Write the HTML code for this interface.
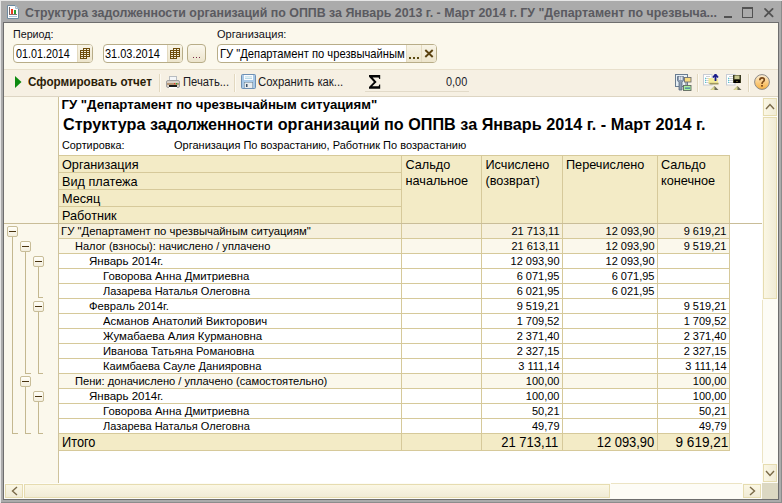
<!DOCTYPE html>
<html><head><meta charset="utf-8">
<style>
*{margin:0;padding:0;box-sizing:border-box}
html,body{width:782px;height:503px;overflow:hidden;background:#ababab}
body{position:relative;font-family:"Liberation Sans",sans-serif;color:#000}
.t{position:absolute;white-space:nowrap;line-height:1}
.b{position:absolute}
svg{position:absolute}
</style></head><body>

<div class="b" style="left:0px;top:0px;width:782px;height:1px;background:#e6e6e6"></div>
<div class="b" style="left:0px;top:0px;width:1px;height:503px;background:#e6e6e6"></div>
<div class="b" style="left:781px;top:1px;width:1px;height:502px;background:#8c8c8c"></div>
<div class="b" style="left:1px;top:502px;width:781px;height:1px;background:#8c8c8c"></div>
<div class="b" style="left:3px;top:22px;width:776px;height:478px;background:#6e6e6e"></div>
<div class="b" style="left:4px;top:23px;width:774px;height:476px;background:#fbf8ec"></div>
<svg style="left:7px;top:5px" width="12" height="14" viewBox="0 0 12 14">
<path d="M0.5 0.5h8l3 3v10h-11z" fill="#fdfdfd" stroke="#6e8aa0"/>
<path d="M8.5 0.5v3h3" fill="#d8e4ee" stroke="#a8bccc"/>
<rect x="2" y="2" width="1" height="8" fill="#7a6a6a"/>
<rect x="4" y="4" width="2" height="5" fill="#ea3a22"/>
<rect x="7" y="5" width="2" height="4" fill="#2aa030"/>
<rect x="2" y="9" width="8" height="1" fill="#8a7070"/>
<rect x="2" y="11" width="8" height="1" fill="#a8c4dc"/>
</svg>
<div class="t" style="left:25px;top:6.50px;font-size:12.4px;font-weight:bold;color:#5a5a60;">Структура задолженности организаций по ОППВ за Январь 2013 г. - Март 2014 г. ГУ "Департамент по чрезвыча...</div>
<div class="b" style="left:724px;top:16px;width:8px;height:2px;background:#525252"></div>
<div class="b" style="left:742px;top:7px;width:11px;height:11px;border:1px solid #525252;border-top-width:2px"></div>
<svg style="left:763px;top:7px" width="12" height="11" viewBox="0 0 12 11"><path d="M2 1.9L9.6 9.4M9.6 1.9L2 9.4" stroke="#525252" stroke-width="1.8" stroke-linecap="round"/></svg>
<div class="t" style="left:13px;top:28.69px;font-size:11px;color:#101018;transform:scaleX(0.974);transform-origin:0 0;">Период:</div>
<div class="t" style="left:217px;top:28.69px;font-size:11px;color:#101018;">Организация:</div>
<div class="b" style="left:13px;top:44px;width:80px;height:19px;border:1px solid #b8ad88;border-radius:4px;background:#fff"></div>
<div class="b" style="left:77px;top:45px;width:15px;height:17px;background:linear-gradient(#f8f4e6,#ede5cc);border-left:1px solid #e3dac0;border-radius:0 2px 2px 0"></div>
<svg style="left:80px;top:48px" width="10" height="11" viewBox="0 0 10 11"><rect x="3" y="0" width="7" height="1" fill="#6e4c0a"/><rect x="0" y="2" width="10" height="1" fill="#6e4c0a"/><rect x="0" y="4" width="10" height="1" fill="#6e4c0a"/><rect x="0" y="6" width="10" height="1" fill="#6e4c0a"/><rect x="0" y="8" width="10" height="1" fill="#6e4c0a"/><rect x="0" y="10" width="7" height="1" fill="#6e4c0a"/><rect x="3" y="1" width="1" height="1" fill="#6e4c0a"/><rect x="6" y="1" width="1" height="1" fill="#6e4c0a"/><rect x="9" y="1" width="1" height="1" fill="#6e4c0a"/><rect x="9" y="1" width="1" height="1" fill="#6e4c0a"/><rect x="4" y="1" width="1" height="1" fill="#f6f0da"/><rect x="5" y="1" width="1" height="1" fill="#f6f0da"/><rect x="7" y="1" width="1" height="1" fill="#f6f0da"/><rect x="8" y="1" width="1" height="1" fill="#f6f0da"/><rect x="0" y="3" width="1" height="1" fill="#6e4c0a"/><rect x="3" y="3" width="1" height="1" fill="#6e4c0a"/><rect x="6" y="3" width="1" height="1" fill="#6e4c0a"/><rect x="9" y="3" width="1" height="1" fill="#6e4c0a"/><rect x="9" y="3" width="1" height="1" fill="#6e4c0a"/><rect x="1" y="3" width="1" height="1" fill="#f6f0da"/><rect x="2" y="3" width="1" height="1" fill="#f6f0da"/><rect x="4" y="3" width="1" height="1" fill="#f6f0da"/><rect x="5" y="3" width="1" height="1" fill="#f6f0da"/><rect x="7" y="3" width="1" height="1" fill="#f6f0da"/><rect x="8" y="3" width="1" height="1" fill="#f6f0da"/><rect x="0" y="5" width="1" height="1" fill="#6e4c0a"/><rect x="3" y="5" width="1" height="1" fill="#6e4c0a"/><rect x="6" y="5" width="1" height="1" fill="#6e4c0a"/><rect x="9" y="5" width="1" height="1" fill="#6e4c0a"/><rect x="9" y="5" width="1" height="1" fill="#6e4c0a"/><rect x="1" y="5" width="1" height="1" fill="#f6f0da"/><rect x="2" y="5" width="1" height="1" fill="#f6f0da"/><rect x="4" y="5" width="1" height="1" fill="#f6f0da"/><rect x="5" y="5" width="1" height="1" fill="#f6f0da"/><rect x="7" y="5" width="1" height="1" fill="#f6f0da"/><rect x="8" y="5" width="1" height="1" fill="#f6f0da"/><rect x="0" y="7" width="1" height="1" fill="#6e4c0a"/><rect x="3" y="7" width="1" height="1" fill="#6e4c0a"/><rect x="6" y="7" width="1" height="1" fill="#6e4c0a"/><rect x="9" y="7" width="1" height="1" fill="#6e4c0a"/><rect x="9" y="7" width="1" height="1" fill="#6e4c0a"/><rect x="1" y="7" width="1" height="1" fill="#f6f0da"/><rect x="2" y="7" width="1" height="1" fill="#f6f0da"/><rect x="4" y="7" width="1" height="1" fill="#f6f0da"/><rect x="5" y="7" width="1" height="1" fill="#f6f0da"/><rect x="7" y="7" width="1" height="1" fill="#f6f0da"/><rect x="8" y="7" width="1" height="1" fill="#f6f0da"/><rect x="0" y="9" width="1" height="1" fill="#6e4c0a"/><rect x="3" y="9" width="1" height="1" fill="#6e4c0a"/><rect x="6" y="9" width="1" height="1" fill="#6e4c0a"/><rect x="6" y="9" width="1" height="1" fill="#6e4c0a"/><rect x="1" y="9" width="1" height="1" fill="#f6f0da"/><rect x="2" y="9" width="1" height="1" fill="#f6f0da"/><rect x="4" y="9" width="1" height="1" fill="#f6f0da"/><rect x="5" y="9" width="1" height="1" fill="#f6f0da"/></svg>
<div class="t" style="left:16px;top:47.52px;font-size:12.38px;;transform:scaleX(0.869);transform-origin:0 0;">01.01.2014</div>
<div class="b" style="left:103px;top:44px;width:80px;height:19px;border:1px solid #b8ad88;border-radius:4px;background:#fff"></div>
<div class="b" style="left:167px;top:45px;width:15px;height:17px;background:linear-gradient(#f8f4e6,#ede5cc);border-left:1px solid #e3dac0;border-radius:0 2px 2px 0"></div>
<svg style="left:170px;top:48px" width="10" height="11" viewBox="0 0 10 11"><rect x="3" y="0" width="7" height="1" fill="#6e4c0a"/><rect x="0" y="2" width="10" height="1" fill="#6e4c0a"/><rect x="0" y="4" width="10" height="1" fill="#6e4c0a"/><rect x="0" y="6" width="10" height="1" fill="#6e4c0a"/><rect x="0" y="8" width="10" height="1" fill="#6e4c0a"/><rect x="0" y="10" width="7" height="1" fill="#6e4c0a"/><rect x="3" y="1" width="1" height="1" fill="#6e4c0a"/><rect x="6" y="1" width="1" height="1" fill="#6e4c0a"/><rect x="9" y="1" width="1" height="1" fill="#6e4c0a"/><rect x="9" y="1" width="1" height="1" fill="#6e4c0a"/><rect x="4" y="1" width="1" height="1" fill="#f6f0da"/><rect x="5" y="1" width="1" height="1" fill="#f6f0da"/><rect x="7" y="1" width="1" height="1" fill="#f6f0da"/><rect x="8" y="1" width="1" height="1" fill="#f6f0da"/><rect x="0" y="3" width="1" height="1" fill="#6e4c0a"/><rect x="3" y="3" width="1" height="1" fill="#6e4c0a"/><rect x="6" y="3" width="1" height="1" fill="#6e4c0a"/><rect x="9" y="3" width="1" height="1" fill="#6e4c0a"/><rect x="9" y="3" width="1" height="1" fill="#6e4c0a"/><rect x="1" y="3" width="1" height="1" fill="#f6f0da"/><rect x="2" y="3" width="1" height="1" fill="#f6f0da"/><rect x="4" y="3" width="1" height="1" fill="#f6f0da"/><rect x="5" y="3" width="1" height="1" fill="#f6f0da"/><rect x="7" y="3" width="1" height="1" fill="#f6f0da"/><rect x="8" y="3" width="1" height="1" fill="#f6f0da"/><rect x="0" y="5" width="1" height="1" fill="#6e4c0a"/><rect x="3" y="5" width="1" height="1" fill="#6e4c0a"/><rect x="6" y="5" width="1" height="1" fill="#6e4c0a"/><rect x="9" y="5" width="1" height="1" fill="#6e4c0a"/><rect x="9" y="5" width="1" height="1" fill="#6e4c0a"/><rect x="1" y="5" width="1" height="1" fill="#f6f0da"/><rect x="2" y="5" width="1" height="1" fill="#f6f0da"/><rect x="4" y="5" width="1" height="1" fill="#f6f0da"/><rect x="5" y="5" width="1" height="1" fill="#f6f0da"/><rect x="7" y="5" width="1" height="1" fill="#f6f0da"/><rect x="8" y="5" width="1" height="1" fill="#f6f0da"/><rect x="0" y="7" width="1" height="1" fill="#6e4c0a"/><rect x="3" y="7" width="1" height="1" fill="#6e4c0a"/><rect x="6" y="7" width="1" height="1" fill="#6e4c0a"/><rect x="9" y="7" width="1" height="1" fill="#6e4c0a"/><rect x="9" y="7" width="1" height="1" fill="#6e4c0a"/><rect x="1" y="7" width="1" height="1" fill="#f6f0da"/><rect x="2" y="7" width="1" height="1" fill="#f6f0da"/><rect x="4" y="7" width="1" height="1" fill="#f6f0da"/><rect x="5" y="7" width="1" height="1" fill="#f6f0da"/><rect x="7" y="7" width="1" height="1" fill="#f6f0da"/><rect x="8" y="7" width="1" height="1" fill="#f6f0da"/><rect x="0" y="9" width="1" height="1" fill="#6e4c0a"/><rect x="3" y="9" width="1" height="1" fill="#6e4c0a"/><rect x="6" y="9" width="1" height="1" fill="#6e4c0a"/><rect x="6" y="9" width="1" height="1" fill="#6e4c0a"/><rect x="1" y="9" width="1" height="1" fill="#f6f0da"/><rect x="2" y="9" width="1" height="1" fill="#f6f0da"/><rect x="4" y="9" width="1" height="1" fill="#f6f0da"/><rect x="5" y="9" width="1" height="1" fill="#f6f0da"/></svg>
<div class="t" style="left:105px;top:47.52px;font-size:12.38px;;transform:scaleX(0.885);transform-origin:0 0;">31.03.2014</div>
<div class="b" style="left:187px;top:44px;width:19px;height:19px;border:1px solid #b8ad88;border-radius:4px;background:linear-gradient(#fbf8ee,#ece4cc)"></div>
<div class="b" style="left:193px;top:57px;width:1px;height:1px;background:#7a2a4a"></div>
<div class="b" style="left:196px;top:57px;width:1px;height:1px;background:#7a2a4a"></div>
<div class="b" style="left:199px;top:57px;width:1px;height:1px;background:#7a2a4a"></div>
<div class="b" style="left:217px;top:44px;width:220px;height:19px;border:1px solid #b8ad88;border-radius:4px;background:#fff"></div>
<div class="b" style="left:406px;top:45px;width:30px;height:17px;background:linear-gradient(#f8f4e6,#ede5cc);border-left:1px solid #e3dac0;border-radius:0 2px 2px 0"></div>
<div class="b" style="left:421px;top:45px;width:1px;height:17px;background:#e3dac0"></div>
<div class="t" style="left:220px;top:47.52px;font-size:12.38px;;transform:scaleX(0.905);transform-origin:0 0;">ГУ "Департамент по чрезвычайным</div>
<div class="b" style="left:409px;top:57px;width:2px;height:2px;background:#5a4a12"></div>
<div class="b" style="left:413px;top:57px;width:2px;height:2px;background:#5a4a12"></div>
<div class="b" style="left:417px;top:57px;width:2px;height:2px;background:#5a4a12"></div>
<svg style="left:424px;top:49px" width="10" height="9" viewBox="0 0 10 9"><path d="M1.3 1L8.7 8M8.7 1L1.3 8" stroke="#5a4210" stroke-width="1.9"/></svg>
<div class="b" style="left:4px;top:69px;width:774px;height:1px;background:#e8e0cc"></div>
<div class="b" style="left:4px;top:70px;width:774px;height:26px;background:#f6f0e3"></div>
<div class="b" style="left:4px;top:96px;width:774px;height:1px;background:#ddd5c3"></div>
<svg style="left:15px;top:76px" width="7" height="12" viewBox="0 0 7 12"><path d="M0 0L6.5 6L0 12z" fill="#0c8a10"/></svg>
<div class="t" style="left:28px;top:75.84px;font-size:12px;font-weight:bold;color:#2b1d08;transform:scaleX(0.976);transform-origin:0 0;">Сформировать отчет</div>
<div class="b" style="left:159px;top:74px;width:1px;height:18px;background:#e2d8c0"></div>
<div class="b" style="left:160px;top:74px;width:1px;height:18px;background:#fdfaf2"></div>
<div class="b" style="left:234px;top:74px;width:1px;height:18px;background:#e2d8c0"></div>
<div class="b" style="left:235px;top:74px;width:1px;height:18px;background:#fdfaf2"></div>
<div class="b" style="left:697px;top:74px;width:1px;height:18px;background:#e2d8c0"></div>
<div class="b" style="left:698px;top:74px;width:1px;height:18px;background:#fdfaf2"></div>
<div class="b" style="left:748px;top:74px;width:1px;height:18px;background:#e2d8c0"></div>
<div class="b" style="left:749px;top:74px;width:1px;height:18px;background:#fdfaf2"></div>
<svg style="left:166px;top:76px" width="14" height="13" viewBox="0 0 14 13">
<rect x="3.5" y="0.5" width="7" height="5" fill="#f4f6f8" stroke="#b8bcc0"/>
<rect x="0.5" y="4.5" width="13" height="7" rx="1.5" fill="#d8d0c8" stroke="#a0a0a0"/>
<rect x="1" y="7" width="12" height="2" fill="#b89878"/>
<rect x="3" y="9" width="8" height="2" fill="#1a1a1a"/>
<rect x="3" y="11" width="8" height="1.5" fill="#fff"/>
<rect x="8" y="7" width="1.2" height="1.2" fill="#e83a20"/>
<rect x="10" y="7" width="1.2" height="1.2" fill="#20b030"/>
</svg>
<div class="t" style="left:183px;top:75.84px;font-size:12px;color:#1a1a22;transform:scaleX(0.935);transform-origin:0 0;">Печать...</div>
<svg style="left:241px;top:74px" width="15" height="15" viewBox="0 0 15 15">
<rect x="0.5" y="0.5" width="14" height="14" rx="1" fill="#a8c8e6" stroke="#6e90b4"/>
<rect x="3" y="1" width="9" height="5" fill="#fafcfe"/>
<rect x="4" y="2.5" width="7" height="0.8" fill="#a8d0e0"/>
<rect x="4" y="4.2" width="7" height="0.8" fill="#a8d0e0"/>
<rect x="3" y="8" width="9" height="6" fill="#5a7890"/>
<rect x="3.5" y="8.5" width="8" height="5.5" fill="#e8ecee"/>
<rect x="5" y="10" width="1.5" height="3" fill="#3a5068"/>
</svg>
<div class="t" style="left:258px;top:75.84px;font-size:12px;color:#1a1a22;transform:scaleX(0.943);transform-origin:0 0;">Сохранить как...</div>
<svg style="left:368px;top:74px" width="14" height="16" viewBox="0 0 14 16"><path d="M1 1H12.2V5H11.3L10.6 3.6H4.6L8.6 8.1L4.2 12.3H10.6L11.3 10.6H12.2V14.7H1V13.1L5.9 8.1L1 2.7Z" fill="#050505"/></svg>
<div class="b" style="left:365px;top:91px;width:104px;height:1px;background:#e2dac8"></div>
<div class="t" style="left:446px;top:75.84px;font-size:12px;color:#1a1a2a;transform:scaleX(0.909);transform-origin:0 0;">0,00</div>
<svg style="left:675px;top:74px" width="17" height="17" viewBox="0 0 17 17">
<rect x="0.5" y="0.5" width="12" height="12" fill="#e6f0f6" stroke="#6a7c90"/>
<path d="M3 2.5h7v3h-7z" fill="#fff"/>
<path d="M2.5 2.5h6v4l-1.5 2v7.5h-3v-7.5l-1.5-2z" fill="#8c9cb0" stroke="#5a6a80" stroke-width="0.8"/>
<rect x="4.2" y="2.5" width="1.2" height="3.5" fill="#f4f6f8"/>
<rect x="6.2" y="2.5" width="1.2" height="3.5" fill="#f4f6f8"/>
<path d="M11 7.5v4" stroke="#707070"/>
<rect x="9.5" y="3.5" width="6.5" height="4.5" fill="#f8dc80" stroke="#707070" stroke-width="0.9"/>
<rect x="8.5" y="11.5" width="7.5" height="5" fill="#a8f0a0" stroke="#606860" stroke-width="0.9"/>
<rect x="10" y="13.6" width="5" height="1" fill="#2a5aa0"/>
</svg>
<svg style="left:703px;top:74px" width="17" height="17" viewBox="0 0 17 17"><rect x="0.5" y="0.5" width="8.5" height="10.5" fill="#fff" stroke="#c8ccd4"/>
<path d="M3 2.5h4M3 4.5h4M3 6.5h4M3 8.5h4" stroke="#c0c4c8" stroke-width="0.8"/>
<rect x="2" y="3.8" width="1" height="1" fill="#30b8c8"/><rect x="2" y="5.8" width="1" height="1" fill="#30b8c8"/><rect x="2" y="7.8" width="1" height="1" fill="#30b8c8"/>
<path d="M7.5 16l4-4 4 4z" fill="#6a6a58"/><path d="M7.5 16l4-4v4z" fill="#dcd890"/>
<path d="M5.5 4h4l1 1h4.5v4.5h-9.5z" fill="#f4ec9c"/>
<path d="M5 9.5h10.5v-1l-9-0z" fill="#d8cc80"/>
<path d="M6.5 9h9v1.5h-9z" fill="#a09860"/>
<path d="M12.5 7v-6M10 3.5l2.5-3 2.5 3" stroke="#1a1e8a" stroke-width="1.8" fill="none"/>
</svg>
<svg style="left:726px;top:74px" width="17" height="17" viewBox="0 0 17 17"><rect x="0.5" y="0.5" width="8.5" height="10.5" fill="#fff" stroke="#c8ccd4"/>
<path d="M3 2.5h4M3 4.5h4M3 6.5h4M3 8.5h4" stroke="#c0c4c8" stroke-width="0.8"/>
<rect x="2" y="3.8" width="1" height="1" fill="#30b8c8"/><rect x="2" y="5.8" width="1" height="1" fill="#30b8c8"/><rect x="2" y="7.8" width="1" height="1" fill="#30b8c8"/>
<path d="M7.5 16l4-4 4 4z" fill="#6a6a58"/><path d="M7.5 16l4-4v4z" fill="#dcd890"/>
<rect x="7" y="1" width="8" height="8" fill="#3a3a20"/>
<rect x="8.5" y="1.5" width="5" height="3.5" fill="#c8c890"/>
<rect x="8" y="6" width="6" height="3" fill="#000"/>
<rect x="10.5" y="7" width="1" height="1" fill="#b0a040"/>
</svg>
<svg style="left:754px;top:74px" width="16" height="16" viewBox="0 0 16 16">
<defs><linearGradient id="hg" x1="0" y1="0" x2="0" y2="1"><stop offset="0" stop-color="#fdf0d8"/><stop offset="0.6" stop-color="#fac878"/><stop offset="1" stop-color="#f6b040"/></linearGradient></defs>
<circle cx="8" cy="8" r="7.4" fill="url(#hg)" stroke="#8c8a88" stroke-width="1"/>
<path d="M5.8 6.2c0-1.6 1-2.3 2.3-2.3s2.2 0.8 2.2 2c0 1.6-2.2 1.8-2.2 3.4v0.6" stroke="#7a4818" stroke-width="1.6" fill="none"/>
<rect x="7.1" y="11" width="1.8" height="1.6" fill="#7a4818"/>
</svg>
<div class="b" style="left:4px;top:97px;width:758px;height:386px;background:#fff"></div>
<div class="b" style="left:4px;top:97px;width:54px;height:386px;background:#fbf8ec"></div>
<div class="b" style="left:58px;top:97px;width:1px;height:386px;background:#cfc39c"></div>
<div class="t" style="left:61.5px;top:98.43px;font-size:13.2px;font-weight:bold;">ГУ "Департамент по чрезвычайным ситуациям"</div>
<div class="t" style="left:63px;top:116.29px;font-size:16.2px;font-weight:bold;">Структура задолженности организаций по ОППВ за Январь 2014 г. - Март 2014 г.</div>
<div class="t" style="left:62px;top:140.00px;font-size:10.63px;;transform:scaleX(1.02);transform-origin:0 0;">Сортировка:</div>
<div class="t" style="left:174px;top:140.00px;font-size:10.63px;;transform:scaleX(1.036);transform-origin:0 0;">Организация По возрастанию, Работник По возрастанию</div>
<div class="b" style="left:59px;top:155px;width:670px;height:68px;background:#f3ebc6"></div>
<div class="b" style="left:59px;top:155px;width:671px;height:1px;background:#d6c99a"></div>
<div class="b" style="left:59px;top:172px;width:342px;height:1px;background:#d6c99a"></div>
<div class="b" style="left:59px;top:189px;width:342px;height:1px;background:#d6c99a"></div>
<div class="b" style="left:59px;top:206px;width:342px;height:1px;background:#d6c99a"></div>
<div class="b" style="left:401px;top:155px;width:1px;height:68px;background:#d6c99a"></div>
<div class="b" style="left:481px;top:155px;width:1px;height:68px;background:#d6c99a"></div>
<div class="b" style="left:562px;top:155px;width:1px;height:68px;background:#d6c99a"></div>
<div class="b" style="left:657px;top:155px;width:1px;height:68px;background:#d6c99a"></div>
<div class="b" style="left:729px;top:155px;width:1px;height:68px;background:#d6c99a"></div>
<div class="t" style="left:62px;top:159.25px;font-size:12.7px;;">Организация</div>
<div class="t" style="left:62px;top:176.25px;font-size:12.7px;;">Вид платежа</div>
<div class="t" style="left:62px;top:193.25px;font-size:12.7px;;">Месяц</div>
<div class="t" style="left:62px;top:210.25px;font-size:12.7px;;">Работник</div>
<div class="t" style="left:405.5px;top:159.25px;font-size:12.7px;;">Сальдо</div>
<div class="t" style="left:405.5px;top:175.25px;font-size:12.7px;;">начальное</div>
<div class="t" style="left:485.5px;top:159.25px;font-size:12.7px;;">Исчислено</div>
<div class="t" style="left:485.5px;top:175.25px;font-size:12.7px;;">(возврат)</div>
<div class="t" style="left:566px;top:159.25px;font-size:12.7px;;">Перечислено</div>
<div class="t" style="left:661px;top:159.25px;font-size:12.7px;;">Сальдо</div>
<div class="t" style="left:661px;top:175.25px;font-size:12.7px;;">конечное</div>
<div class="b" style="left:4px;top:223px;width:758px;height:1px;background:#c9bd98"></div>
<div class="b" style="left:59px;top:224px;width:671px;height:14px;background:#f6f0dc"></div>
<div class="b" style="left:59px;top:238px;width:671px;height:1px;background:#d6c99a"></div>
<div class="b" style="left:401px;top:224px;width:1px;height:15px;background:#d6c99a"></div>
<div class="b" style="left:481px;top:224px;width:1px;height:15px;background:#d6c99a"></div>
<div class="b" style="left:562px;top:224px;width:1px;height:15px;background:#d6c99a"></div>
<div class="b" style="left:657px;top:224px;width:1px;height:15px;background:#d6c99a"></div>
<div class="b" style="left:729px;top:224px;width:1px;height:15px;background:#d6c99a"></div>
<div class="t" style="left:60.7px;top:225.82px;font-size:11.2px;;transform:scaleX(1.012);transform-origin:0 0;">ГУ "Департамент по чрезвычайным ситуациям"</div>
<div class="t" style="right:222.5px;top:225.99px;font-size:11px;;">21 713,11</div>
<div class="t" style="right:127.5px;top:225.99px;font-size:11px;;">12 093,90</div>
<div class="t" style="right:55.5px;top:225.99px;font-size:11px;;">9 619,21</div>
<div class="b" style="left:59px;top:239px;width:671px;height:14px;background:#fbf8ec"></div>
<div class="b" style="left:59px;top:253px;width:671px;height:1px;background:#d6c99a"></div>
<div class="b" style="left:401px;top:239px;width:1px;height:15px;background:#d6c99a"></div>
<div class="b" style="left:481px;top:239px;width:1px;height:15px;background:#d6c99a"></div>
<div class="b" style="left:562px;top:239px;width:1px;height:15px;background:#d6c99a"></div>
<div class="b" style="left:657px;top:239px;width:1px;height:15px;background:#d6c99a"></div>
<div class="b" style="left:729px;top:239px;width:1px;height:15px;background:#d6c99a"></div>
<div class="t" style="left:74.7px;top:240.82px;font-size:11.2px;;transform:scaleX(0.987);transform-origin:0 0;">Налог (взносы): начислено / уплачено</div>
<div class="t" style="right:222.5px;top:240.99px;font-size:11px;;">21 613,11</div>
<div class="t" style="right:127.5px;top:240.99px;font-size:11px;;">12 093,90</div>
<div class="t" style="right:55.5px;top:240.99px;font-size:11px;;">9 519,21</div>
<div class="b" style="left:59px;top:254px;width:671px;height:14px;background:#fff"></div>
<div class="b" style="left:59px;top:268px;width:671px;height:1px;background:#d6c99a"></div>
<div class="b" style="left:401px;top:254px;width:1px;height:15px;background:#d6c99a"></div>
<div class="b" style="left:481px;top:254px;width:1px;height:15px;background:#d6c99a"></div>
<div class="b" style="left:562px;top:254px;width:1px;height:15px;background:#d6c99a"></div>
<div class="b" style="left:657px;top:254px;width:1px;height:15px;background:#d6c99a"></div>
<div class="b" style="left:729px;top:254px;width:1px;height:15px;background:#d6c99a"></div>
<div class="t" style="left:88.7px;top:255.82px;font-size:11.2px;;transform:scaleX(1.029);transform-origin:0 0;">Январь 2014г.</div>
<div class="t" style="right:222.5px;top:255.99px;font-size:11px;;">12 093,90</div>
<div class="t" style="right:127.5px;top:255.99px;font-size:11px;;">12 093,90</div>
<div class="b" style="left:59px;top:269px;width:671px;height:14px;background:#fff"></div>
<div class="b" style="left:59px;top:283px;width:671px;height:1px;background:#d6c99a"></div>
<div class="b" style="left:401px;top:269px;width:1px;height:15px;background:#d6c99a"></div>
<div class="b" style="left:481px;top:269px;width:1px;height:15px;background:#d6c99a"></div>
<div class="b" style="left:562px;top:269px;width:1px;height:15px;background:#d6c99a"></div>
<div class="b" style="left:657px;top:269px;width:1px;height:15px;background:#d6c99a"></div>
<div class="b" style="left:729px;top:269px;width:1px;height:15px;background:#d6c99a"></div>
<div class="t" style="left:102.7px;top:270.82px;font-size:11.2px;;transform:scaleX(1.017);transform-origin:0 0;">Говорова Анна Дмитриевна</div>
<div class="t" style="right:222.5px;top:270.99px;font-size:11px;;">6 071,95</div>
<div class="t" style="right:127.5px;top:270.99px;font-size:11px;;">6 071,95</div>
<div class="b" style="left:59px;top:284px;width:671px;height:14px;background:#fff"></div>
<div class="b" style="left:59px;top:298px;width:671px;height:1px;background:#d6c99a"></div>
<div class="b" style="left:401px;top:284px;width:1px;height:15px;background:#d6c99a"></div>
<div class="b" style="left:481px;top:284px;width:1px;height:15px;background:#d6c99a"></div>
<div class="b" style="left:562px;top:284px;width:1px;height:15px;background:#d6c99a"></div>
<div class="b" style="left:657px;top:284px;width:1px;height:15px;background:#d6c99a"></div>
<div class="b" style="left:729px;top:284px;width:1px;height:15px;background:#d6c99a"></div>
<div class="t" style="left:102.7px;top:285.82px;font-size:11.2px;;transform:scaleX(0.986);transform-origin:0 0;">Лазарева Наталья Олеговна</div>
<div class="t" style="right:222.5px;top:285.99px;font-size:11px;;">6 021,95</div>
<div class="t" style="right:127.5px;top:285.99px;font-size:11px;;">6 021,95</div>
<div class="b" style="left:59px;top:299px;width:671px;height:14px;background:#fff"></div>
<div class="b" style="left:59px;top:313px;width:671px;height:1px;background:#d6c99a"></div>
<div class="b" style="left:401px;top:299px;width:1px;height:15px;background:#d6c99a"></div>
<div class="b" style="left:481px;top:299px;width:1px;height:15px;background:#d6c99a"></div>
<div class="b" style="left:562px;top:299px;width:1px;height:15px;background:#d6c99a"></div>
<div class="b" style="left:657px;top:299px;width:1px;height:15px;background:#d6c99a"></div>
<div class="b" style="left:729px;top:299px;width:1px;height:15px;background:#d6c99a"></div>
<div class="t" style="left:88.7px;top:300.82px;font-size:11.2px;;transform:scaleX(1.006);transform-origin:0 0;">Февраль 2014г.</div>
<div class="t" style="right:222.5px;top:300.99px;font-size:11px;;">9 519,21</div>
<div class="t" style="right:55.5px;top:300.99px;font-size:11px;;">9 519,21</div>
<div class="b" style="left:59px;top:314px;width:671px;height:14px;background:#fff"></div>
<div class="b" style="left:59px;top:328px;width:671px;height:1px;background:#d6c99a"></div>
<div class="b" style="left:401px;top:314px;width:1px;height:15px;background:#d6c99a"></div>
<div class="b" style="left:481px;top:314px;width:1px;height:15px;background:#d6c99a"></div>
<div class="b" style="left:562px;top:314px;width:1px;height:15px;background:#d6c99a"></div>
<div class="b" style="left:657px;top:314px;width:1px;height:15px;background:#d6c99a"></div>
<div class="b" style="left:729px;top:314px;width:1px;height:15px;background:#d6c99a"></div>
<div class="t" style="left:102.7px;top:315.82px;font-size:11.2px;;transform:scaleX(1.016);transform-origin:0 0;">Асманов Анатолий Викторович</div>
<div class="t" style="right:222.5px;top:315.99px;font-size:11px;;">1 709,52</div>
<div class="t" style="right:55.5px;top:315.99px;font-size:11px;;">1 709,52</div>
<div class="b" style="left:59px;top:329px;width:671px;height:14px;background:#fff"></div>
<div class="b" style="left:59px;top:343px;width:671px;height:1px;background:#d6c99a"></div>
<div class="b" style="left:401px;top:329px;width:1px;height:15px;background:#d6c99a"></div>
<div class="b" style="left:481px;top:329px;width:1px;height:15px;background:#d6c99a"></div>
<div class="b" style="left:562px;top:329px;width:1px;height:15px;background:#d6c99a"></div>
<div class="b" style="left:657px;top:329px;width:1px;height:15px;background:#d6c99a"></div>
<div class="b" style="left:729px;top:329px;width:1px;height:15px;background:#d6c99a"></div>
<div class="t" style="left:102.7px;top:330.82px;font-size:11.2px;;transform:scaleX(1.023);transform-origin:0 0;">Жумабаева Алия Курмановна</div>
<div class="t" style="right:222.5px;top:330.99px;font-size:11px;;">2 371,40</div>
<div class="t" style="right:55.5px;top:330.99px;font-size:11px;;">2 371,40</div>
<div class="b" style="left:59px;top:344px;width:671px;height:14px;background:#fff"></div>
<div class="b" style="left:59px;top:358px;width:671px;height:1px;background:#d6c99a"></div>
<div class="b" style="left:401px;top:344px;width:1px;height:15px;background:#d6c99a"></div>
<div class="b" style="left:481px;top:344px;width:1px;height:15px;background:#d6c99a"></div>
<div class="b" style="left:562px;top:344px;width:1px;height:15px;background:#d6c99a"></div>
<div class="b" style="left:657px;top:344px;width:1px;height:15px;background:#d6c99a"></div>
<div class="b" style="left:729px;top:344px;width:1px;height:15px;background:#d6c99a"></div>
<div class="t" style="left:102.7px;top:345.82px;font-size:11.2px;;transform:scaleX(1.007);transform-origin:0 0;">Иванова Татьяна Романовна</div>
<div class="t" style="right:222.5px;top:345.99px;font-size:11px;;">2 327,15</div>
<div class="t" style="right:55.5px;top:345.99px;font-size:11px;;">2 327,15</div>
<div class="b" style="left:59px;top:359px;width:671px;height:14px;background:#fff"></div>
<div class="b" style="left:59px;top:373px;width:671px;height:1px;background:#d6c99a"></div>
<div class="b" style="left:401px;top:359px;width:1px;height:15px;background:#d6c99a"></div>
<div class="b" style="left:481px;top:359px;width:1px;height:15px;background:#d6c99a"></div>
<div class="b" style="left:562px;top:359px;width:1px;height:15px;background:#d6c99a"></div>
<div class="b" style="left:657px;top:359px;width:1px;height:15px;background:#d6c99a"></div>
<div class="b" style="left:729px;top:359px;width:1px;height:15px;background:#d6c99a"></div>
<div class="t" style="left:102.7px;top:360.82px;font-size:11.2px;;transform:scaleX(0.997);transform-origin:0 0;">Каимбаева Сауле Данияровна</div>
<div class="t" style="right:222.5px;top:360.99px;font-size:11px;;">3 111,14</div>
<div class="t" style="right:55.5px;top:360.99px;font-size:11px;;">3 111,14</div>
<div class="b" style="left:59px;top:374px;width:671px;height:14px;background:#fbf8ec"></div>
<div class="b" style="left:59px;top:388px;width:671px;height:1px;background:#d6c99a"></div>
<div class="b" style="left:401px;top:374px;width:1px;height:15px;background:#d6c99a"></div>
<div class="b" style="left:481px;top:374px;width:1px;height:15px;background:#d6c99a"></div>
<div class="b" style="left:562px;top:374px;width:1px;height:15px;background:#d6c99a"></div>
<div class="b" style="left:657px;top:374px;width:1px;height:15px;background:#d6c99a"></div>
<div class="b" style="left:729px;top:374px;width:1px;height:15px;background:#d6c99a"></div>
<div class="t" style="left:74.7px;top:375.82px;font-size:11.2px;;transform:scaleX(0.996);transform-origin:0 0;">Пени: доначислено / уплачено (самостоятельно)</div>
<div class="t" style="right:222.5px;top:375.99px;font-size:11px;;">100,00</div>
<div class="t" style="right:55.5px;top:375.99px;font-size:11px;;">100,00</div>
<div class="b" style="left:59px;top:389px;width:671px;height:14px;background:#fff"></div>
<div class="b" style="left:59px;top:403px;width:671px;height:1px;background:#d6c99a"></div>
<div class="b" style="left:401px;top:389px;width:1px;height:15px;background:#d6c99a"></div>
<div class="b" style="left:481px;top:389px;width:1px;height:15px;background:#d6c99a"></div>
<div class="b" style="left:562px;top:389px;width:1px;height:15px;background:#d6c99a"></div>
<div class="b" style="left:657px;top:389px;width:1px;height:15px;background:#d6c99a"></div>
<div class="b" style="left:729px;top:389px;width:1px;height:15px;background:#d6c99a"></div>
<div class="t" style="left:88.7px;top:390.82px;font-size:11.2px;;transform:scaleX(1.029);transform-origin:0 0;">Январь 2014г.</div>
<div class="t" style="right:222.5px;top:390.99px;font-size:11px;;">100,00</div>
<div class="t" style="right:55.5px;top:390.99px;font-size:11px;;">100,00</div>
<div class="b" style="left:59px;top:404px;width:671px;height:14px;background:#fff"></div>
<div class="b" style="left:59px;top:418px;width:671px;height:1px;background:#d6c99a"></div>
<div class="b" style="left:401px;top:404px;width:1px;height:15px;background:#d6c99a"></div>
<div class="b" style="left:481px;top:404px;width:1px;height:15px;background:#d6c99a"></div>
<div class="b" style="left:562px;top:404px;width:1px;height:15px;background:#d6c99a"></div>
<div class="b" style="left:657px;top:404px;width:1px;height:15px;background:#d6c99a"></div>
<div class="b" style="left:729px;top:404px;width:1px;height:15px;background:#d6c99a"></div>
<div class="t" style="left:102.7px;top:405.82px;font-size:11.2px;;transform:scaleX(1.017);transform-origin:0 0;">Говорова Анна Дмитриевна</div>
<div class="t" style="right:222.5px;top:405.99px;font-size:11px;;">50,21</div>
<div class="t" style="right:55.5px;top:405.99px;font-size:11px;;">50,21</div>
<div class="b" style="left:59px;top:419px;width:671px;height:14px;background:#fff"></div>
<div class="b" style="left:59px;top:433px;width:671px;height:1px;background:#d6c99a"></div>
<div class="b" style="left:401px;top:419px;width:1px;height:15px;background:#d6c99a"></div>
<div class="b" style="left:481px;top:419px;width:1px;height:15px;background:#d6c99a"></div>
<div class="b" style="left:562px;top:419px;width:1px;height:15px;background:#d6c99a"></div>
<div class="b" style="left:657px;top:419px;width:1px;height:15px;background:#d6c99a"></div>
<div class="b" style="left:729px;top:419px;width:1px;height:15px;background:#d6c99a"></div>
<div class="t" style="left:102.7px;top:420.82px;font-size:11.2px;;transform:scaleX(0.986);transform-origin:0 0;">Лазарева Наталья Олеговна</div>
<div class="t" style="right:222.5px;top:420.99px;font-size:11px;;">49,79</div>
<div class="t" style="right:55.5px;top:420.99px;font-size:11px;;">49,79</div>
<div class="b" style="left:59px;top:434px;width:670px;height:16px;background:#f3ebc6"></div>
<div class="b" style="left:59px;top:450px;width:671px;height:1px;background:#d6c99a"></div>
<div class="b" style="left:401px;top:434px;width:1px;height:17px;background:#d6c99a"></div>
<div class="b" style="left:481px;top:434px;width:1px;height:17px;background:#d6c99a"></div>
<div class="b" style="left:562px;top:434px;width:1px;height:17px;background:#d6c99a"></div>
<div class="b" style="left:657px;top:434px;width:1px;height:17px;background:#d6c99a"></div>
<div class="b" style="left:729px;top:434px;width:1px;height:17px;background:#d6c99a"></div>
<div class="t" style="left:62px;top:435.15px;font-size:14px;;transform:scaleX(0.912);transform-origin:0 0;">Итого</div>
<div class="t" style="right:224px;top:434.96px;font-size:14.22px;;transform:scaleX(0.917);transform-origin:100% 0;">21 713,11</div>
<div class="t" style="right:128px;top:434.96px;font-size:14.22px;;transform:scaleX(0.91);transform-origin:100% 0;">12 093,90</div>
<div class="t" style="right:54px;top:434.96px;font-size:14.22px;;transform:scaleX(0.954);transform-origin:100% 0;">9 619,21</div>
<div class="b" style="left:7px;top:226px;width:11px;height:11px;border:1px solid #c8bd98;border-radius:2px;background:linear-gradient(#fffef8,#f3eedd)"></div>
<div class="b" style="left:9px;top:231px;width:7px;height:1px;background:#4a3410"></div>
<div class="b" style="left:12px;top:237px;width:1px;height:197px;background:#c4b890"></div>
<div class="b" style="left:12px;top:433px;width:6px;height:1px;background:#c4b890"></div>
<div class="b" style="left:20px;top:241px;width:11px;height:11px;border:1px solid #c8bd98;border-radius:2px;background:linear-gradient(#fffef8,#f3eedd)"></div>
<div class="b" style="left:22px;top:246px;width:7px;height:1px;background:#4a3410"></div>
<div class="b" style="left:25px;top:252px;width:1px;height:122px;background:#c4b890"></div>
<div class="b" style="left:25px;top:373px;width:6px;height:1px;background:#c4b890"></div>
<div class="b" style="left:33px;top:256px;width:11px;height:11px;border:1px solid #c8bd98;border-radius:2px;background:linear-gradient(#fffef8,#f3eedd)"></div>
<div class="b" style="left:35px;top:261px;width:7px;height:1px;background:#4a3410"></div>
<div class="b" style="left:38px;top:267px;width:1px;height:31px;background:#c4b890"></div>
<div class="b" style="left:38px;top:297px;width:5px;height:1px;background:#c4b890"></div>
<div class="b" style="left:33px;top:301px;width:11px;height:11px;border:1px solid #c8bd98;border-radius:2px;background:linear-gradient(#fffef8,#f3eedd)"></div>
<div class="b" style="left:35px;top:306px;width:7px;height:1px;background:#4a3410"></div>
<div class="b" style="left:38px;top:312px;width:1px;height:62px;background:#c4b890"></div>
<div class="b" style="left:38px;top:373px;width:5px;height:1px;background:#c4b890"></div>
<div class="b" style="left:20px;top:376px;width:11px;height:11px;border:1px solid #c8bd98;border-radius:2px;background:linear-gradient(#fffef8,#f3eedd)"></div>
<div class="b" style="left:22px;top:381px;width:7px;height:1px;background:#4a3410"></div>
<div class="b" style="left:25px;top:387px;width:1px;height:47px;background:#c4b890"></div>
<div class="b" style="left:25px;top:433px;width:6px;height:1px;background:#c4b890"></div>
<div class="b" style="left:33px;top:391px;width:11px;height:11px;border:1px solid #c8bd98;border-radius:2px;background:linear-gradient(#fffef8,#f3eedd)"></div>
<div class="b" style="left:35px;top:396px;width:7px;height:1px;background:#4a3410"></div>
<div class="b" style="left:38px;top:402px;width:1px;height:32px;background:#c4b890"></div>
<div class="b" style="left:38px;top:433px;width:5px;height:1px;background:#c4b890"></div>
<div class="b" style="left:762px;top:97px;width:16px;height:386px;background:#fdfcf6"></div>
<div class="b" style="left:762px;top:300px;width:1px;height:163px;background:#ece4c4"></div>
<div class="b" style="left:763px;top:98px;width:14px;height:18px;border:1px solid #e6dcb0;background:linear-gradient(90deg,#fbf7e4,#f0ebd6)"></div>
<svg style="left:765px;top:103px" width="10" height="7" viewBox="0 0 10 7"><path d="M1 6L5 1.5L9 6" stroke="#7a6a48" stroke-width="1.4" fill="none"/></svg>
<div class="b" style="left:763px;top:117px;width:14px;height:182px;border:1px solid #e6dcb0;background:linear-gradient(90deg,#fbf7e4,#f0ebd6)"></div>
<div class="b" style="left:763px;top:464px;width:14px;height:18px;border:1px solid #e6dcb0;background:linear-gradient(90deg,#fbf7e4,#f0ebd6)"></div>
<svg style="left:765px;top:470px" width="10" height="7" viewBox="0 0 10 7"><path d="M1 1L5 5.5L9 1" stroke="#7a6a48" stroke-width="1.4" fill="none"/></svg>
<div class="b" style="left:4px;top:483px;width:758px;height:16px;background:#fdfcf6"></div>
<div class="b" style="left:611px;top:483px;width:131px;height:1px;background:#ece4c4"></div>
<div class="b" style="left:5px;top:484px;width:18px;height:14px;border:1px solid #e6dcb0;background:linear-gradient(#fbf7e4,#f0ebd6)"></div>
<svg style="left:11px;top:486px" width="7" height="10" viewBox="0 0 7 10"><path d="M6 1L1.5 5L6 9" stroke="#7a6a48" stroke-width="1.4" fill="none"/></svg>
<div class="b" style="left:24px;top:484px;width:586px;height:14px;border:1px solid #e6dcb0;background:linear-gradient(#fbf7e4,#f0ebd6)"></div>
<div class="b" style="left:743px;top:484px;width:18px;height:14px;border:1px solid #e6dcb0;background:linear-gradient(#fbf7e4,#f0ebd6)"></div>
<svg style="left:749px;top:486px" width="7" height="10" viewBox="0 0 7 10"><path d="M1 1L5.5 5L1 9" stroke="#7a6a48" stroke-width="1.4" fill="none"/></svg>
<div class="b" style="left:762px;top:483px;width:16px;height:16px;background:#dcd8c2"></div>
</body></html>
